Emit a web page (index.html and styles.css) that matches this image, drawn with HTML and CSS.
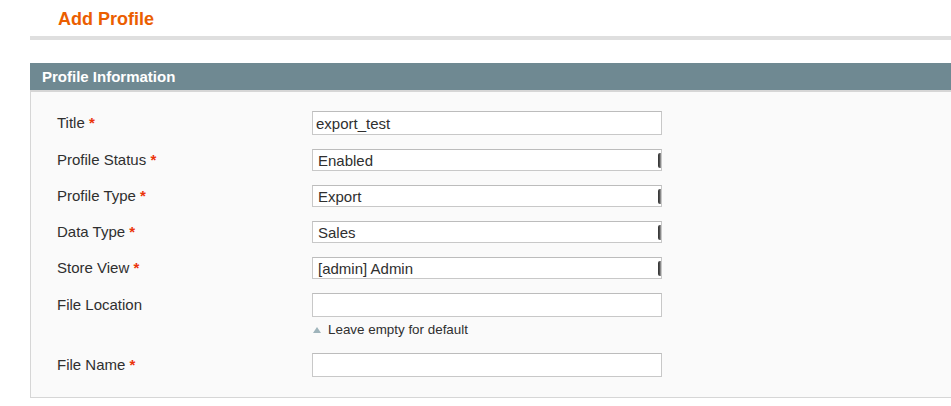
FILE: index.html
```html
<!DOCTYPE html>
<html lang="en">
<head>
  <meta charset="UTF-8">
  <title>Add Profile</title>
  <link rel="stylesheet" href="styles.css">
</head>
<body>
  <div class="page">
    <div class="content-header">
      <h3>Add Profile</h3>
    </div>

    <div class="entry-edit">
      <div class="entry-edit-head">Profile Information</div>
      <div class="fieldset">
        <div class="form-list">
          <label class="label" for="title">Title <span class="required">*</span></label>
          <div class="value"><input type="text" id="title" class="input-text" value="export_test"></div>

          <label class="label for-select" for="status">Profile Status <span class="required">*</span></label>
          <div class="value">
            <span class="select-wrap">
              <select id="status" class="select"><option>Enabled</option><option>Disabled</option></select>
            </span>
          </div>

          <label class="label for-select" for="direction">Profile Type <span class="required">*</span></label>
          <div class="value">
            <span class="select-wrap">
              <select id="direction" class="select"><option>Export</option><option>Import</option></select>
            </span>
          </div>

          <label class="label for-select" for="entity">Data Type <span class="required">*</span></label>
          <div class="value">
            <span class="select-wrap">
              <select id="entity" class="select"><option>Sales</option><option>Products</option><option>Customers</option></select>
            </span>
          </div>

          <label class="label for-select" for="store">Store View <span class="required">*</span></label>
          <div class="value">
            <span class="select-wrap">
              <select id="store" class="select"><option>[admin] Admin</option><option>Default Store View</option></select>
            </span>
          </div>

          <label class="label spaced" for="location">File Location</label>
          <div class="value spaced">
            <input type="text" id="location" class="input-text">
            <p class="note"><span class="note-arrow"></span>Leave empty for default</p>
          </div>

          <label class="label" for="filename">File Name <span class="required">*</span></label>
          <div class="value"><input type="text" id="filename" class="input-text"></div>
        </div>
      </div>
    </div>
  </div>
</body>
</html>
```

FILE: styles.css
```css
* {
  box-sizing: border-box;
}

body {
  margin: 0;
  background: #fff;
  font-family: 'Liberation Sans', Arial, sans-serif;
  color: #2f2f2f;
  overflow: hidden;
}

.page {
  padding-left: 30px;
  margin-right: -10px;
}

.content-header {
  border-bottom: 4px solid #dfdfdf;
  padding: 8px 0 6px 28px;
}

.content-header h3 {
  margin: 0;
  font-size: 18px;
  line-height: 22px;
  color: #eb5e00;
  font-weight: bold;
}

.entry-edit {
  margin-top: 23px;
}

.entry-edit-head {
  background: #6f8992;
  color: #fff;
  font-weight: bold;
  font-size: 15px;
  line-height: 27px;
  padding-left: 12px;
}

.fieldset {
  background: #fafafa;
  border: 1px solid #d6d6d6;
  border-top-width: 2px;
  border-right: none;
  padding: 19px 0 20px 26px;
}

.form-list {
  display: grid;
  grid-template-columns: 255px 350px;
  row-gap: 12px;
  align-items: start;
}

.label {
  font-size: 15px;
  line-height: 24px;
}

.label.for-select {
  margin-top: 2px;
  line-height: 22px;
}

.spaced {
  margin-top: 2px;
}

.required {
  color: #eb340a;
  font-weight: bold;
}

.input-text,
.select {
  display: block;
  width: 350px;
  margin: 0;
  border: 1px solid #c8c8c8;
  border-top-color: #bcbcbc;
  background: #fff;
  font-family: inherit;
  font-size: 15px;
  color: #2f2f2f;
  border-radius: 0;
  outline: none;
}

.input-text {
  height: 24px;
  padding: 0 3px;
}

.select-wrap {
  display: block;
  position: relative;
  width: 350px;
  margin-top: 2px;
}

.select {
  appearance: none;
  -webkit-appearance: none;
  height: 22px;
  padding: 0 4px 0 5px;
}

.select-wrap::after {
  content: "";
  position: absolute;
  right: 1px;
  top: 4px;
  width: 3px;
  height: 15px;
  background: linear-gradient(to right, #3a3a3a 40%, #a8a8a8);
  border-radius: 2px 0 0 2px;
}

.note {
  margin: 5px 0 3px;
  font-size: 13.4px;
  line-height: 16px;
  display: flex;
  align-items: center;
}

.note-arrow {
  width: 0;
  height: 0;
  border-left: 4px solid transparent;
  border-right: 4px solid transparent;
  border-bottom: 6px solid #9fb4bb;
  margin: 0 7px 0 1px;
}
```
